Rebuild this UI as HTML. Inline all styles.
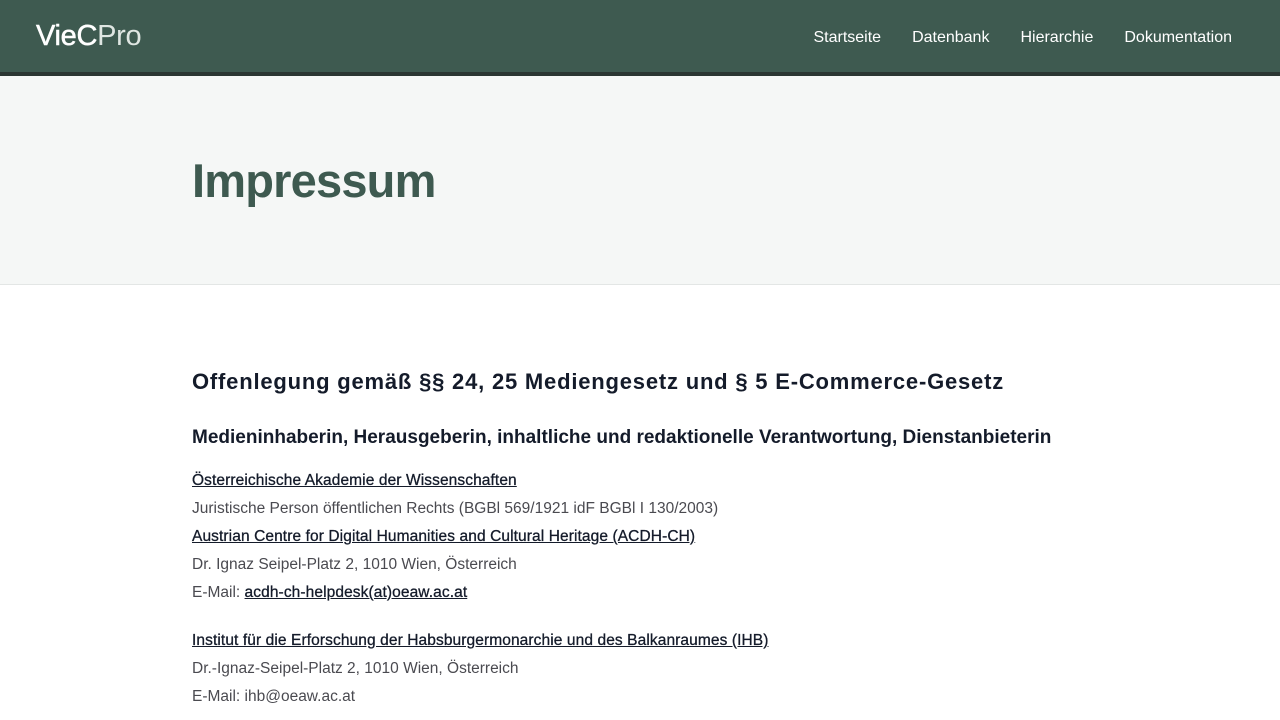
<!DOCTYPE html>
<html><head><meta charset="utf-8"><style>
*{margin:0;padding:0;box-sizing:border-box}
body{width:1280px;height:720px;overflow:hidden;font-family:"Liberation Sans",sans-serif;background:#fff;color:#444}
.nav{background:#3e5a50;border-bottom:4px solid #2b3632;position:relative;height:76px}
.logo{position:absolute;left:36px;top:20px;font-size:29px;color:#fff;letter-spacing:-0.3px}
.logo b{font-weight:normal;-webkit-text-stroke:0.5px #fff}
.logo span{color:#dfe6e2}
.links{position:absolute;right:48px;top:29px;font-size:16px;color:#fff}
.links a{margin-left:31px;color:#fff;text-decoration:none}
.hero{height:209px;background:#f5f7f6;border-bottom:1px solid #e3e6e5;padding-left:192px}
.hero h1{font-size:47px;color:#3e5a50;font-weight:bold;padding-top:77px;letter-spacing:-0.8px}
.c{padding-left:192px}
h2{font-size:22px;color:#141b2a;margin-top:84px;letter-spacing:0.8px}
h3{font-size:19px;color:#141b2a;margin-top:32px;font-weight:bold;letter-spacing:0}
p{font-size:15.5px;line-height:28px;color:#4a4a50}
p a{color:#141b2a;text-decoration:underline;-webkit-text-stroke:0.3px #141b2a;letter-spacing:0.1px}
</style></head><body>
<div class="nav"><div class="logo"><b>VieC</b><span>Pro</span></div>
<div class="links"><a>Startseite</a><a>Datenbank</a><a>Hierarchie</a><a>Dokumentation</a></div></div>
<div class="hero"><h1>Impressum</h1></div>
<div class="c">
<h2>Offenlegung gemäß §§ 24, 25 Mediengesetz und § 5 E-Commerce-Gesetz</h2>
<h3>Medieninhaberin, Herausgeberin, inhaltliche und redaktionelle Verantwortung, Dienstanbieterin</h3>
<p style="margin-top:18px"><a>Österreichische Akademie der Wissenschaften</a><br>Juristische Person öffentlichen Rechts (BGBl 569/1921 idF BGBl I 130/2003)<br><a>Austrian Centre for Digital Humanities and Cultural Heritage (ACDH-CH)</a><br>Dr. Ignaz Seipel-Platz 2, 1010 Wien, Österreich<br>E-Mail: <a>acdh-ch-helpdesk(at)oeaw.ac.at</a></p>
<p style="margin-top:20px"><a>Institut für die Erforschung der Habsburgermonarchie und des Balkanraumes (IHB)</a><br>Dr.-Ignaz-Seipel-Platz 2, 1010 Wien, Österreich<br>E-Mail: ihb@oeaw.ac.at</p>
</div>
</body></html>
